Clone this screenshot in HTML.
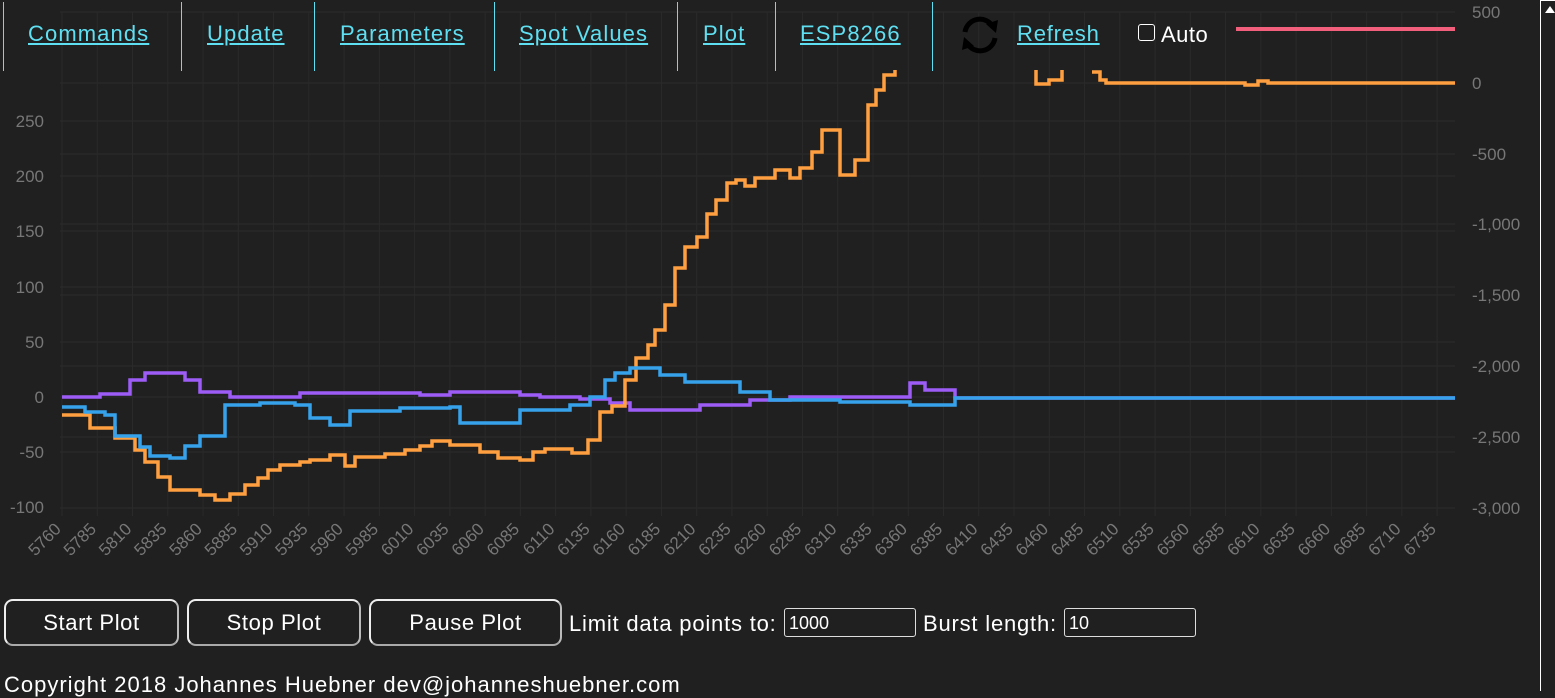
<!DOCTYPE html>
<html><head><meta charset="utf-8"><style>
html,body{margin:0;padding:0;background:#202020;width:1555px;height:690px;overflow:hidden;font-family:"Liberation Sans",Arial,sans-serif;color:#fff}
.nav{position:absolute;left:0;top:0;height:71px;}
.nav a{position:absolute;top:21px;font-size:22px;color:#5fe0f2;text-decoration:underline;white-space:nowrap;letter-spacing:1.1px}
.sep{position:absolute;top:2px;width:1px;height:69px;background:#5fe0f2}
.btn{position:absolute;top:599px;height:43px;border:2px solid #eee;border-bottom-color:#aaa;border-right-color:#bbb;border-radius:9px;font-size:22px;text-align:center;line-height:43px;color:#fff;box-sizing:content-box;letter-spacing:0.6px}
.lbl{position:absolute;top:611px;font-size:22px;letter-spacing:0.8px;white-space:nowrap}
.inp{position:absolute;top:608px;height:29px;border:1px solid #ddd;border-radius:3px;font-size:18px;line-height:29px;padding-left:4px;box-sizing:border-box}
</style></head><body>
<svg width="1555" height="690" style="position:absolute;left:0;top:0">
<g stroke="#2c2c2c" stroke-width="1">
<line x1="60" y1="12" x2="1455" y2="12"/><line x1="60" y1="83" x2="1455" y2="83"/><line x1="60" y1="154" x2="1455" y2="154"/><line x1="60" y1="224" x2="1455" y2="224"/><line x1="60" y1="295" x2="1455" y2="295"/><line x1="60" y1="366" x2="1455" y2="366"/><line x1="60" y1="437" x2="1455" y2="437"/><line x1="60" y1="508" x2="1455" y2="508"/>
<line x1="60" y1="121" x2="1455" y2="121"/><line x1="60" y1="176" x2="1455" y2="176"/><line x1="60" y1="231" x2="1455" y2="231"/><line x1="60" y1="287" x2="1455" y2="287"/><line x1="60" y1="342" x2="1455" y2="342"/><line x1="60" y1="397" x2="1455" y2="397"/><line x1="60" y1="452" x2="1455" y2="452"/>
</g>
<g id="vg" stroke="#2a2a2a"></g>
<g fill="#777" font-size="17" text-anchor="end" font-family="Liberation Sans,sans-serif">
<text x="44" y="127">250</text><text x="44" y="182">200</text><text x="44" y="237">150</text><text x="44" y="293">100</text><text x="44" y="348">50</text><text x="44" y="403">0</text><text x="44" y="458">-50</text><text x="44" y="513">-100</text>
</g>
<g fill="#777" font-size="17" font-family="Liberation Sans,sans-serif">
<text x="1472" y="18">500</text><text x="1472" y="89">0</text><text x="1472" y="160">-500</text><text x="1472" y="230">-1,000</text><text x="1472" y="301">-1,500</text><text x="1472" y="372">-2,000</text><text x="1472" y="443">-2,500</text><text x="1472" y="514">-3,000</text>
</g>
<g id="xl" fill="#777" font-size="17" text-anchor="end" font-family="Liberation Sans,sans-serif"></g>
<line x1="1236" y1="29" x2="1455" y2="29" stroke="#f25f7d" stroke-width="4"/>
<g fill="none" stroke-width="3.5" stroke-linejoin="miter">
<polyline stroke="#9e5cf7" points="62,397 100,397 100,394 130,394 130,380 145,380 145,373 185,373 185,380 200,380 200,392 230,392 230,397 300,397 300,393 420,393 420,395 450,395 450,392 520,392 520,395 540,395 540,397 580,397 580,399 610,399 610,403 630,403 630,410 700,410 700,405 750,405 750,400 790,400 790,397 900,397 910,397 910,383 925,383 925,390 955,390 955,398 1455,398"/>
<polyline stroke="#ff9f40" points="62,415 90,415 90,428 115,428 115,438 135,438 135,450 145,450 145,462 158,462 158,477 170,477 170,490 200,490 200,495 215,495 215,500 230,500 230,494 245,494 245,485 258,485 258,478 268,478 268,470 280,470 280,465 300,465 300,462 310,462 310,460 330,460 330,455 345,455 345,466 355,466 355,457 385,457 385,454 405,454 405,450 420,450 420,446 432,446 432,441 450,441 450,445 480,445 480,452 498,452 498,458 520,458 520,460 533,460 533,452 545,452 545,449 572,449 572,453 588,453 588,440 600,440 600,412 612,412 612,406 625,406 625,380 636,380 636,358 648,358 648,345 655,345 655,330 665,330 665,305 675,305 675,268 685,268 685,247 697,247 697,237 707,237 707,214 716,214 716,200 727,200 727,183 736,183 736,180 745,180 745,186 755,186 755,178 775,178 775,170 790,170 790,178 800,178 800,168 812,168 812,152 822,152 822,130 840,130 840,175 855,175 855,160 868,160 868,105 876,105 876,90 884,90 884,75 895,75 895,70"/>
<polyline stroke="#ff9f40" points="1036,70 1036,84 1049,84 1049,80 1062,80 1062,70"/>
<polyline stroke="#ff9f40" points="1092,72 1100,72 1100,80 1106,80 1106,83 1245,83 1245,85 1258,85 1258,81 1268,81 1268,83 1455,83"/>
<polyline stroke="#36a2eb" points="62,407 85,407 85,412 105,412 105,415 115,415 115,436 140,436 140,447 150,447 150,456 170,456 170,458 185,458 185,446 200,446 200,436 225,436 225,405 260,405 260,403 295,403 295,405 310,405 310,418 330,418 330,425 350,425 350,411 400,411 400,408 450,408 450,407 460,407 460,423 520,423 520,410 570,410 570,405 590,405 590,397 605,397 605,380 615,380 615,373 630,373 630,368 660,368 660,375 685,375 685,382 740,382 740,392 770,392 770,400 840,400 840,402 900,402 910,402 910,405 955,405 955,398 1455,398"/>
</g>
</svg>
<script>
var vg=document.getElementById('vg'),xl=document.getElementById('xl'),ns='http://www.w3.org/2000/svg';
for(var i=0;i<40;i++){var x=62+i*35.26;var l=document.createElementNS(ns,'line');l.setAttribute('x1',x);l.setAttribute('x2',x);l.setAttribute('y1',12);l.setAttribute('y2',516);vg.appendChild(l);
var t=document.createElementNS(ns,'text');t.setAttribute('x',x);t.setAttribute('y',530);t.setAttribute('transform','rotate(-45 '+x+' 530)');t.textContent=5760+25*i;xl.appendChild(t);}
</script>
<div class="nav">
<div class="sep" style="left:3px"></div>
<a style="left:28px">Commands</a>
<div class="sep" style="left:181px"></div>
<a style="left:207px">Update</a>
<div class="sep" style="left:314px"></div>
<a style="left:340px">Parameters</a>
<div class="sep" style="left:494px"></div>
<a style="left:519px">Spot Values</a>
<div class="sep" style="left:677px"></div>
<a style="left:703px">Plot</a>
<div class="sep" style="left:775px"></div>
<a style="left:800px">ESP8266</a>
<div class="sep" style="left:932px"></div>
</div>
<svg width="50" height="50" style="position:absolute;left:955px;top:10px" viewBox="0 0 50 50">
<path d="M10 22 A15 15 0 0 1 38 17" fill="none" stroke="#000" stroke-width="5"/>
<path d="M31 14 L43 10 L41 23 Z" fill="#000"/>
<path d="M40 28 A15 15 0 0 1 12 33" fill="none" stroke="#000" stroke-width="5"/>
<path d="M19 36 L7 40 L9 27 Z" fill="#000"/>
</svg>
<a style="position:absolute;left:1017px;top:21px;font-size:22px;color:#5fe0f2;text-decoration:underline;letter-spacing:0.8px">Refresh</a>
<div style="position:absolute;left:1138px;top:24px;width:15px;height:15px;border:1.5px solid #fff;border-radius:3px"></div>
<div style="position:absolute;left:1161px;top:22px;font-size:22px;letter-spacing:0.5px">Auto</div>
<div style="position:absolute;left:1540px;top:0;width:14px;height:690px;border-left:1px solid #fff;border-top:1px solid #fff"></div>
<div style="position:absolute;left:1545px;top:6px;width:0;height:0;border-left:5px solid transparent;border-right:5px solid transparent;border-bottom:7px solid #fff"></div>
<div class="btn" style="left:4px;width:171px">Start Plot</div>
<div class="btn" style="left:187px;width:170px">Stop Plot</div>
<div class="btn" style="left:369px;width:189px">Pause Plot</div>
<div class="lbl" style="left:569px">Limit data points to:</div>
<div class="inp" style="left:784px;width:132px">1000</div>
<div class="lbl" style="left:923px">Burst length:</div>
<div class="inp" style="left:1064px;width:132px">10</div>
<div style="position:absolute;left:4px;top:672px;font-size:22px;letter-spacing:1px;white-space:nowrap">Copyright 2018 Johannes Huebner dev@johanneshuebner.com</div>
</body></html>
